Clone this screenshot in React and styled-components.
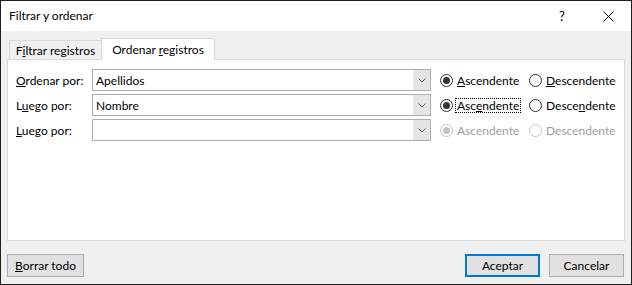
import React from "react";
import styled, { createGlobalStyle, css } from "styled-components";

const Global = createGlobalStyle`
  html, body { margin: 0; padding: 0; background: #fff; }
  * { box-sizing: border-box; }
  body { font-family: Lato, "Noto Sans", sans-serif; font-size: 12px; color: #000; }
`;

const Window = styled.div`
  width: 632px;
  height: 285px;
  border: 1px solid #1f1f1f;
  display: flex;
  flex-direction: column;
  background: #f0f0f0;
`;

const TitleBar = styled.div`
  height: 30px;
  background: #fff;
  display: flex;
  align-items: center;
  padding-left: 8px;
  flex-shrink: 0;
`;

const Title = styled.div`
  flex: 1;
  font-size: 12px;
  padding-bottom: 1px;
`;

const TitleButton = styled.div`
  width: 46px;
  height: 30px;
  display: flex;
  align-items: center;
  justify-content: center;
  font-size: 13px;
`;

const Body = styled.div`
  flex: 1;
  display: flex;
  flex-direction: column;
  padding: 7px 6px 7px 6px;
`;

const TabStrip = styled.div`
  display: flex;
  align-items: flex-end;
  height: 21px;
  position: relative;
  z-index: 1;
`;

const Tab = styled.div`
  display: flex;
  align-items: center;
  justify-content: center;
  border: 1px solid #d9d9d9;
  border-bottom: none;
  white-space: pre;
  ${(p) =>
    p.$active
      ? css`
          height: 22px;
          margin-bottom: -1px;
          background: #fff;
          width: 114px;
          padding-bottom: 1px;
        `
      : css`
          height: 19px;
          margin-left: 2px;
          border-right: none;
          background: #f0f0f0;
          width: 92px;
          padding-top: 1px;
        `}
`;

const Panel = styled.div`
  height: 182px;
  background: #fff;
  border: 1px solid #d9d9d9;
  padding: 9px 8px;
  display: flex;
  flex-direction: column;
  gap: 3px;
`;

const Row = styled.div`
  display: flex;
  align-items: center;
  height: 22px;
`;

const Label = styled.div`
  width: 76px;
  flex-shrink: 0;
`;

const Combo = styled.div`
  width: 339px;
  height: 22px;
  flex-shrink: 0;
  border: 1px solid #adadad;
  display: flex;
  align-items: stretch;
  background: #fff;
`;

const ComboText = styled.div`
  flex: 1;
  padding-left: 3px;
  display: flex;
  align-items: center;
`;

const ComboButton = styled.div`
  width: 17px;
  background: #e5e5e5;
  display: flex;
  align-items: center;
  justify-content: center;
`;

const Radios = styled.div`
  display: flex;
  align-items: center;
  margin-left: 9px;
`;

const Radio = styled.div`
  display: flex;
  align-items: center;
  width: ${(p) => p.$w}px;
  flex-shrink: 0;
  color: ${(p) => (p.$disabled ? "#a0a0a0" : "#000")};
`;

const Circle = styled.span`
  width: 13px;
  height: 13px;
  border-radius: 50%;
  border: 1px solid ${(p) => (p.$disabled ? "#c4c4c4" : "#333")};
  background: #fff;
  display: flex;
  align-items: center;
  justify-content: center;
  margin-right: 3px;
  flex-shrink: 0;
  &::after {
    content: "";
    display: ${(p) => (p.$checked ? "block" : "none")};
    width: 7px;
    height: 7px;
    border-radius: 50%;
    background: ${(p) => (p.$disabled ? "#c4c4c4" : "#333")};
  }
`;

const RadioText = styled.span`
  padding: 0 1px;
  line-height: 13px;
  white-space: nowrap;
  outline: ${(p) => (p.$focus ? "1px dotted #000" : "none")};
`;

const Footer = styled.div`
  flex: 1;
  display: flex;
  align-items: flex-end;
  justify-content: space-between;
`;

const Button = styled.div`
  width: ${(p) => p.$w || 75}px;
  height: 23px;
  background: #e1e1e1;
  border: ${(p) => (p.$default ? "2px solid #0078d7" : "1px solid #adadad")};
  display: flex;
  align-items: center;
  justify-content: center;
  white-space: pre;
`;

const ButtonGroup = styled.div`
  display: flex;
  gap: 9px;
  margin-right: 1px;
`;

const Chevron = () => (
  <svg width="8" height="5" viewBox="0 0 8 5">
    <path d="M0.5 0.5 L4 4 L7.5 0.5" fill="none" stroke="#606060" strokeWidth="1" />
  </svg>
);

const CloseIcon = () => (
  <svg width="11" height="11" viewBox="0 0 11 11">
    <path d="M0.5 0.5 L10.5 10.5 M10.5 0.5 L0.5 10.5" stroke="#000" strokeWidth="1" />
  </svg>
);

const rows = [
  { label: <><u>O</u>rdenar por:</>, value: "Apellidos", asc: <><u>A</u>scendente</>, desc: <><u>D</u>escendente</> },
  { label: <>L<u>u</u>ego por:</>, value: "Nombre", asc: <>Asc<u>e</u>ndente</>, desc: <>Desce<u>n</u>dente</>, focus: true },
  { label: <><u>L</u>uego por:</>, value: "", asc: <>Ascendente</>, desc: <>Descendente</>, disabled: true },
];

export default function App() {
  return (
    <>
      <Global />
      <Window>
        <TitleBar>
          <Title>Filtrar y ordenar</Title>
          <TitleButton>?</TitleButton>
          <TitleButton><CloseIcon /></TitleButton>
        </TitleBar>
        <Body>
          <TabStrip>
            <Tab><span>F<u>i</u>ltrar registros</span></Tab>
            <Tab $active><span>Ordenar <u>r</u>egistros</span></Tab>
          </TabStrip>
          <Panel>
            {rows.map((r, i) => (
              <Row key={i}>
                <Label>{r.label}</Label>
                <Combo>
                  <ComboText>{r.value}</ComboText>
                  <ComboButton><Chevron /></ComboButton>
                </Combo>
                <Radios>
                  <Radio $w={89} $disabled={r.disabled}>
                    <Circle $checked $disabled={r.disabled} />
                    <RadioText $focus={r.focus}>{r.asc}</RadioText>
                  </Radio>
                  <Radio $w={90} $disabled={r.disabled}>
                    <Circle $disabled={r.disabled} />
                    <RadioText>{r.desc}</RadioText>
                  </Radio>
                </Radios>
              </Row>
            ))}
          </Panel>
          <Footer>
            <Button $w={77}><span><u>B</u>orrar todo</span></Button>
            <ButtonGroup>
              <Button $default>Aceptar</Button>
              <Button>Cancelar</Button>
            </ButtonGroup>
          </Footer>
        </Body>
      </Window>
    </>
  );
}
